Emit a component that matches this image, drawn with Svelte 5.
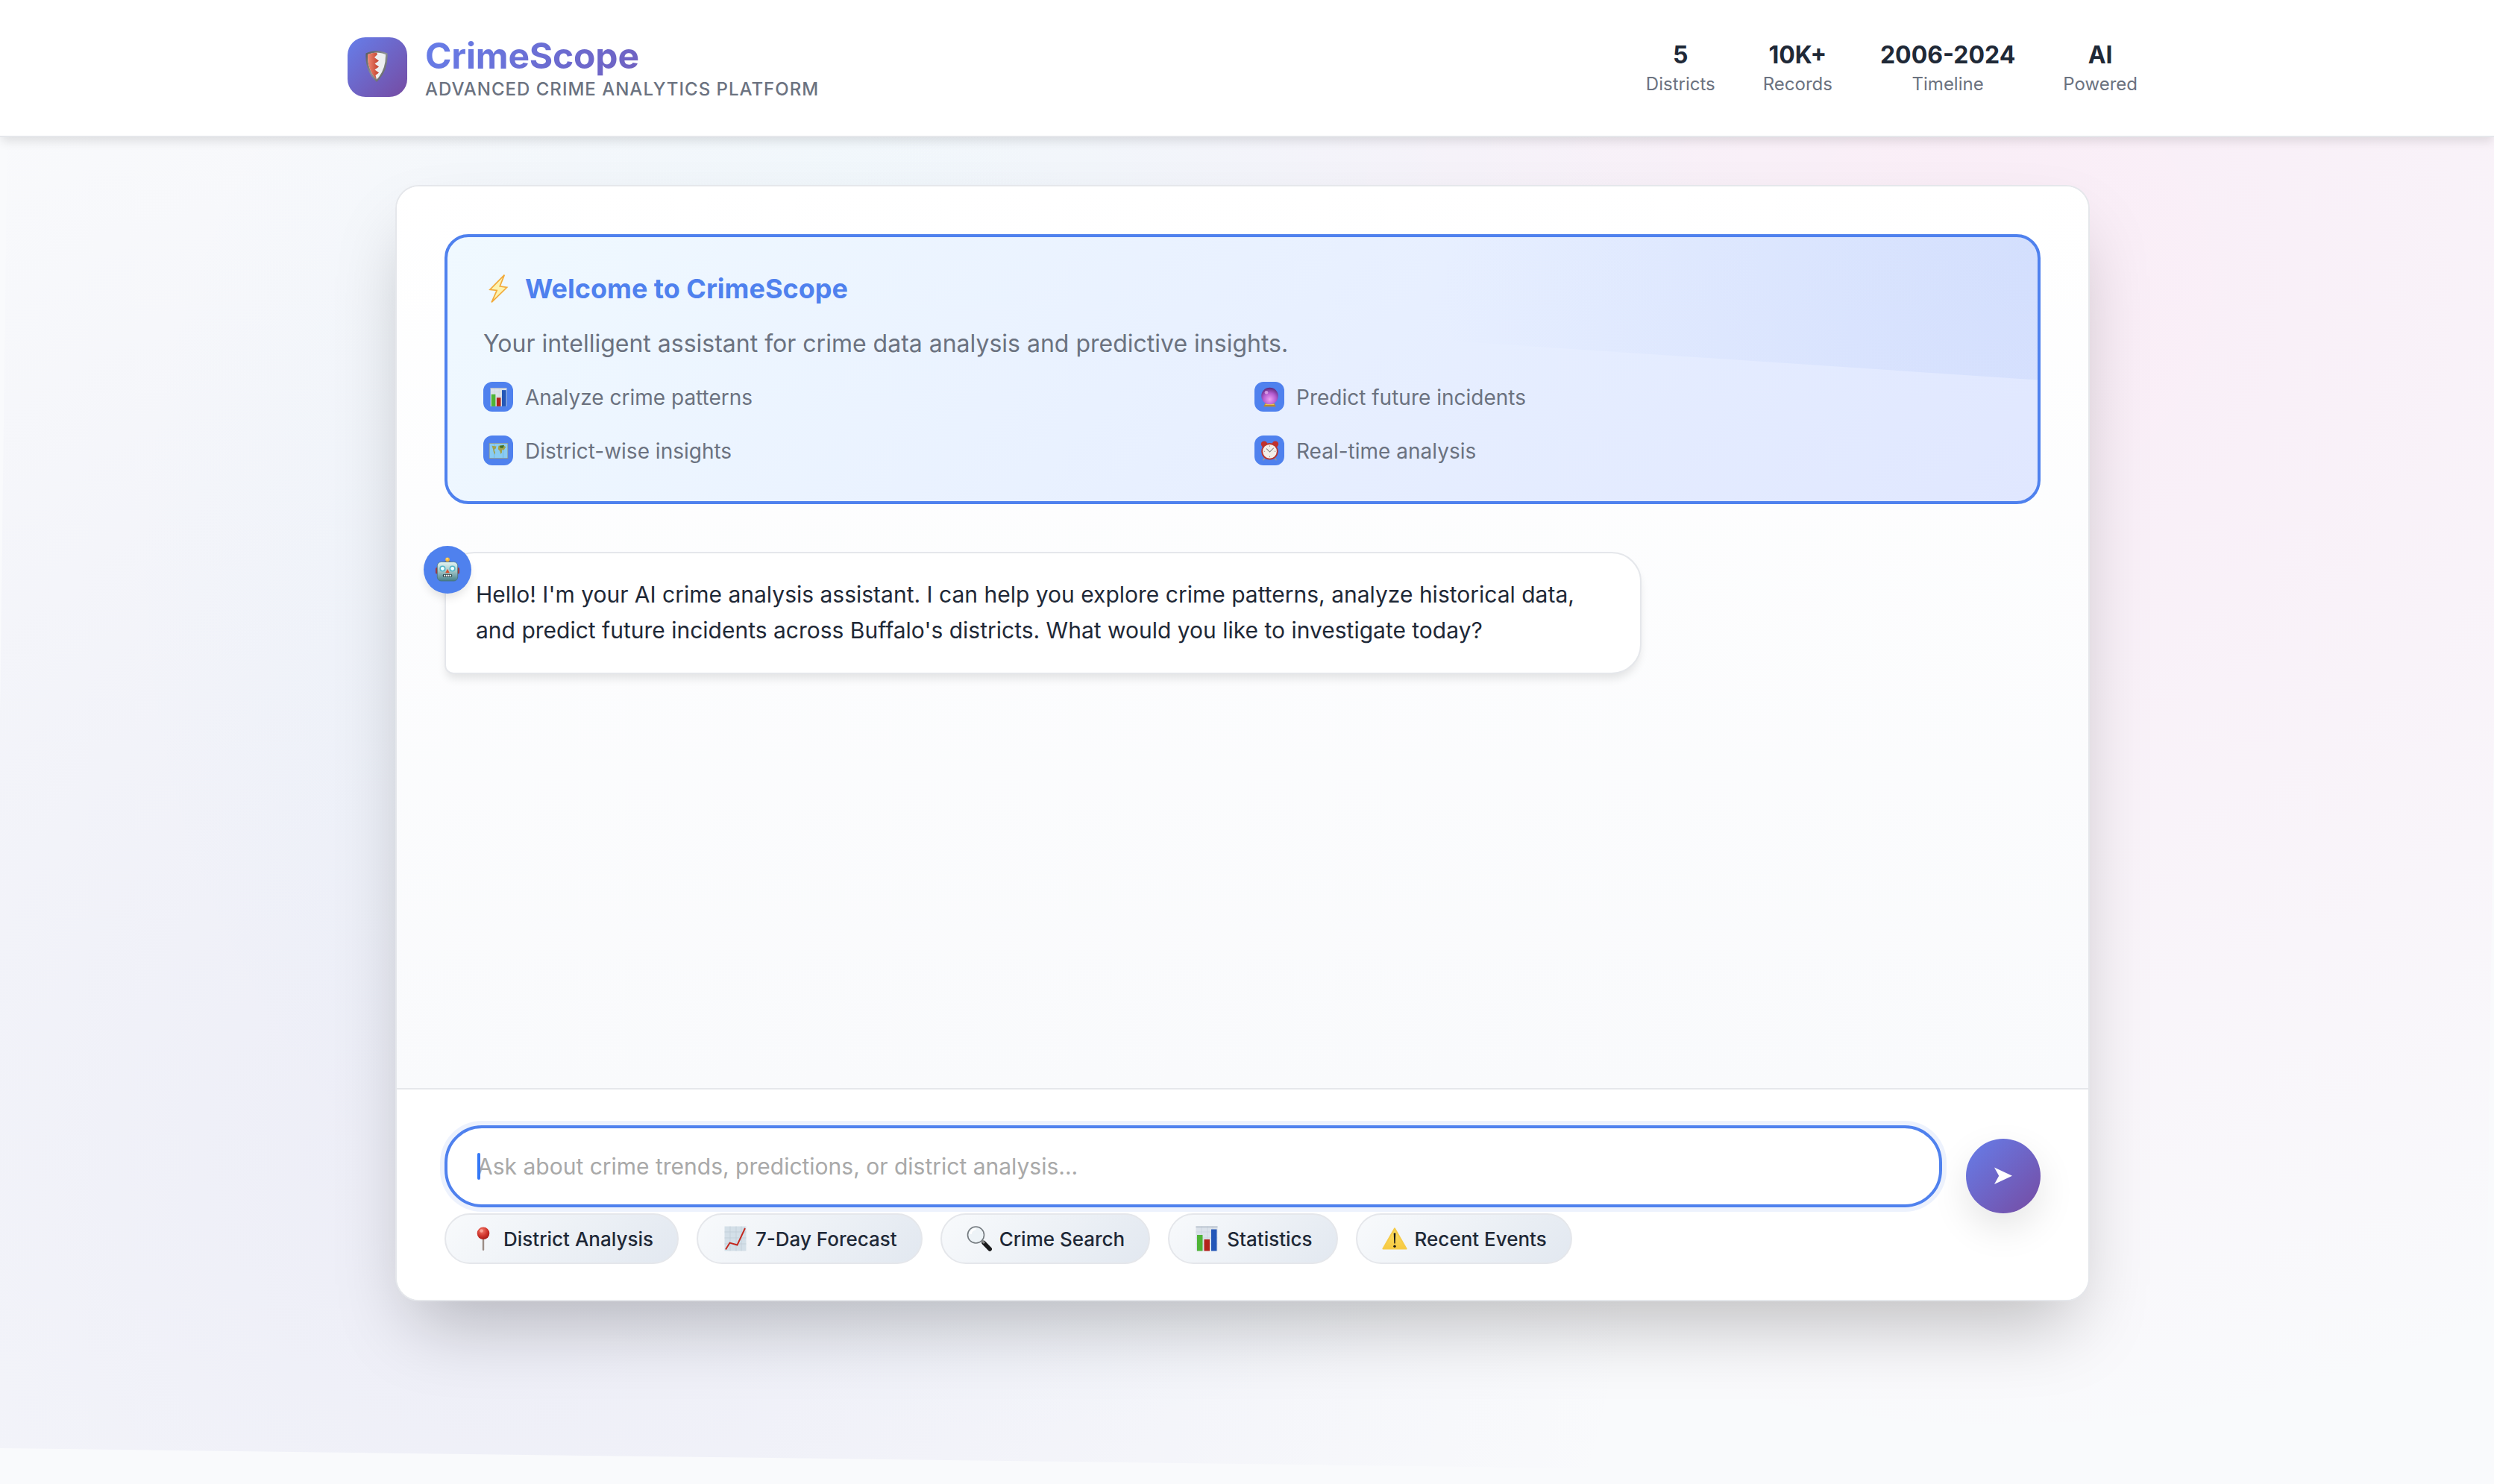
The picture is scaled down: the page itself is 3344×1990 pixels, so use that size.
<script>
  const stats = [
    { value: '5', label: 'Districts' },
    { value: '10K+', label: 'Records' },
    { value: '2006-2024', label: 'Timeline' },
    { value: 'AI', label: 'Powered' }
  ];
  const features = [
    { icon: 'bars', text: 'Analyze crime patterns' },
    { icon: 'crystal', text: 'Predict future incidents' },
    { icon: 'map', text: 'District-wise insights' },
    { icon: 'clock', text: 'Real-time analysis' }
  ];
  const actions = [
    { icon: 'pin', text: 'District Analysis' },
    { icon: 'trend', text: '7-Day Forecast' },
    { icon: 'search', text: 'Crime Search' },
    { icon: 'bars', text: 'Statistics' },
    { icon: 'warning', text: 'Recent Events' }
  ];
</script>

{#snippet glyph(name)}
  <svg class="glyph" viewBox="0 0 36 36" aria-hidden="true">
    {#if name === 'bars'}
      <rect x="3.5" y="1.5" width="29" height="33" fill="#dbe2ea" />
      <path d="M3.5 9h29M3.5 17h29M3.5 25h29M11 1.5v33M19 1.5v33M26 1.5v33" stroke="#c9d2dc" stroke-width=".6" />
      <rect x="3.5" y="1.5" width="29" height="1.5" fill="#b3bdc9" />
      <rect x="5" y="13" width="7.5" height="21.5" fill="#4fb436" />
      <rect x="14.5" y="19" width="7.5" height="15.5" fill="#b3241c" />
      <rect x="24" y="5.5" width="7.5" height="29" fill="#2457b8" />
    {:else if name === 'trend'}
      <rect x="3.5" y="1.5" width="29" height="33" fill="#d3dfe8" />
      <path d="M3.5 9h29M3.5 17h29M3.5 25h29M11 1.5v33M19 1.5v33M26 1.5v33" stroke="#becbd6" stroke-width=".7" />
      <path d="M5 32.5L10.5 23.5L20.5 26.5L31 4" fill="none" stroke="#c4271d" stroke-width="1.9" />
    {:else if name === 'crystal'}
      <path d="M10 29h16l3 6H7z" fill="#b98a2e" />
      <path d="M10 31h16" stroke="#f0cf62" stroke-width="1.5" />
      <circle cx="18" cy="16" r="15" fill="url(#orb)" />
      <circle cx="12" cy="9.5" r="3" fill="#e9b9f4" opacity=".7" />
    {:else if name === 'map'}
      <rect x="1" y="4" width="34" height="28" fill="#8f8f7c" />
      <rect x="2" y="5" width="32" height="26" fill="#8accf2" />
      <path d="M10 5v26M26 5v26" stroke="#6ab0dc" />
      <path d="M6 9l8 1-1 4-3 2 2 5-1 4-2-5-1-5zM18 9l8-1 5 3-3 5-3 1-1-2 0 6-2 3-2-6-3-3z" fill="#a3a24a" />
      <path d="M20 9l8-1-2 5-5 0z" fill="#3c702d" />
    {:else if name === 'clock'}
      <path d="M10 30l-4 5M26 30l4 5" stroke="#999" stroke-width="2" />
      <circle cx="8" cy="6" r="5.5" fill="#c2302b" /><circle cx="28" cy="6" r="5.5" fill="#c2302b" />
      <circle cx="18" cy="19" r="15" fill="#b7352f" />
      <circle cx="18" cy="19" r="12.5" fill="#f3efe9" />
      <path d="M12 14l6 6 7-7" fill="none" stroke="#777" stroke-width="1.4" />
      <path d="M18 8.5v2M18 27.500v2M7.5 19h2M26.5 19h2" stroke="#777" />
    {:else if name === 'pin'}
      <rect x="16.8" y="16" width="2.4" height="18" rx="1.2" fill="#9c8d86" />
      <circle cx="18" cy="10.800" r="8.300" fill="url(#pinhead)" />
      <circle cx="15.5" cy="7.5" r="2.3" fill="#ffb9ac" opacity=".7" />
    {:else if name === 'search'}
      <path d="M24 23.500l8.200 8.500" stroke="#1b1b1d" stroke-width="5.5" stroke-linecap="round" />
      <path d="M21 20l4 4" stroke="#888" stroke-width="3" />
      <circle cx="13.500" cy="13" r="11" fill="#edf3f7" stroke="#73797e" stroke-width="1.6" />
      <path d="M6.500 12a7 7 0 0 1 7-7" fill="none" stroke="#fff" stroke-width="2.5" />
    {:else if name === 'warning'}
      <path d="M18 4.5L33.5 31.5H2.5z" fill="url(#caution)" stroke="#f6cb48" stroke-width="2.2" stroke-linejoin="round" />
      <path d="M16.700 10.500h2.600l-.6 14h-1.400z" fill="#1b1a16" /><circle cx="18" cy="28.200" r="1.700" fill="#1b1a16" />
    {:else if name === 'robot'}
      <path d="M12 9.5q0-3 6-3t6 3z" fill="#51416b" />
      <circle cx="18" cy="4.5" r="3" fill="#f5b53a" /><circle cx="17.4" cy="3.6" r="1.2" fill="#ffe9a0" />
      <rect x="1" y="16" width="4" height="9" rx="2" fill="#a3383c" /><rect x="31" y="16" width="4" height="9" rx="2" fill="#a3383c" />
      <rect x="3.5" y="8" width="29" height="27" rx="5.5" fill="url(#metal)" stroke="#476f76" stroke-width=".8" />
      <circle cx="11" cy="17.5" r="4.3" fill="#51b5c9" /><circle cx="25" cy="17.5" r="4.3" fill="#51b5c9" />
      <circle cx="11" cy="17.5" r="2.6" fill="#f0ffff" /><circle cx="25" cy="17.5" r="2.6" fill="#f0ffff" />
      <path d="M18 18l3 5.5h-6z" fill="#d9512f" />
      <rect x="11.500" y="25.300" width="13" height="4.200" rx="1.500" fill="#243f44" />
      <path d="M13 27.4h10.5" stroke="#f4f4f4" stroke-width="2.3" stroke-dasharray="2 .8" />
    {:else if name === 'bolt'}
      <path d="M25.5 1.5L8 19.2L16.4 20.2L10 34.5L28.5 16.5L20 15.2Z" fill="#fdf3b0" stroke="#f2ab3c" stroke-width="1.5" stroke-linejoin="miter" />
    {/if}
  </svg>
{/snippet}

<svg class="defs" width="0" height="0" aria-hidden="true">
  <defs>
    <radialGradient id="orb" cx=".5" cy=".7" r=".75">
      <stop offset="0" stop-color="#ee9df2" /><stop offset=".5" stop-color="#b35bd0" /><stop offset="1" stop-color="#4f1f6b" />
    </radialGradient>
    <radialGradient id="pinhead" cx=".4" cy=".3" r=".7">
      <stop offset="0" stop-color="#f47a6b" /><stop offset=".6" stop-color="#d0362d" /><stop offset="1" stop-color="#a81d17" />
    </radialGradient>
    <linearGradient id="caution" x1="0" y1="0" x2="0" y2="1">
      <stop offset="0" stop-color="#fbe169" /><stop offset="1" stop-color="#f7c93f" />
    </linearGradient>
    <linearGradient id="metal" x1="0" y1="0" x2="0" y2="1">
      <stop offset="0" stop-color="#e4f5f3" /><stop offset=".5" stop-color="#9ec3c5" /><stop offset="1" stop-color="#477f88" />
    </linearGradient>
    <linearGradient id="steel" x1="0" y1="0" x2="1" y2="1">
      <stop offset="0" stop-color="#55585a" /><stop offset=".5" stop-color="#8e9294" /><stop offset="1" stop-color="#505355" />
    </linearGradient>
    <linearGradient id="red" x1="0" y1="0" x2="1" y2="0">
      <stop offset="0" stop-color="#ef8a74" /><stop offset="1" stop-color="#c23f2b" />
    </linearGradient>
  </defs>
</svg>

<div class="page">
  <div class="ambient"></div>

  <header>
    <div class="bar">
      <div class="brand">
        <div class="logo">
          <svg class="shield" viewBox="0 0 30 42" aria-hidden="true">
            <path d="M15 0Q22 0 29.5 3.5Q31 27 15 42Q-1 27 .5 3.5Q8 0 15 0Z" fill="url(#steel)" />
            <path d="M15 2.5Q21 2.500 27 5Q27.5 26 15 38.500Q2.5 26 3 5Q9 2.5 15 2.5Z" fill="#eef0f1" />
            <path d="M15 2.500Q9 2.500 3 5Q2.500 26 15 38.500L13.500 33L18 29.500L12.500 25.500L18 21.500L12.500 17.500L18 13.500L12 9L16 5Z" fill="url(#red)" />
          </svg>
        </div>
        <div class="names">
          <h1>CrimeScope</h1>
          <p>Advanced Crime Analytics Platform</p>
        </div>
      </div>
      <div class="stats">
        {#each stats as stat}
          <div class="stat">
            <strong>{stat.value}</strong>
            <span>{stat.label}</span>
          </div>
        {/each}
      </div>
    </div>
  </header>

  <main>
    <section class="chat">
      <div class="messages">
        <div class="welcome">
          <h2><span class="bolt">{@render glyph('bolt')}</span>Welcome to CrimeScope</h2>
          <p>Your intelligent assistant for crime data analysis and predictive insights.</p>
          <ul>
            {#each features as feature}
              <li><span class="tile">{@render glyph(feature.icon)}</span><span class="feature">{feature.text}</span></li>
            {/each}
          </ul>
        </div>

        <div class="message">
          <div class="avatar">{@render glyph('robot')}</div>
          Hello! I'm your AI crime analysis assistant. I can help you explore crime patterns, analyze historical data,<br />
          and predict future incidents across Buffalo's districts. What would you like to investigate today?
        </div>
      </div>

      <div class="composer">
        <div class="entry">
          <div class="field"><span class="caret"></span><span class="hint">Ask about crime trends, predictions, or district analysis...</span></div>
          <button class="send" aria-label="Send">
            <svg viewBox="0 0 24 24" aria-hidden="true"><path d="M0 .5L24 11.700L0 23L6.200 11.700Z" fill="#fff" /></svg>
          </button>
        </div>
        <div class="actions">
          {#each actions as action}
            <button class="chip">{@render glyph(action.icon)}<span>{action.text}</span></button>
          {/each}
        </div>
      </div>
    </section>
  </main>
</div>

<style>
  :global(body) {
    margin: 0;
    background: #f9fafc;
  }
  * {
    box-sizing: border-box;
  }
  .defs {
    position: absolute;
  }
  .page {
    position: relative;
    height: 1990px;
    overflow: hidden;
    background: #f9fafc;
    color: #1f2937;
    font-family: Inter, 'Liberation Sans', sans-serif;
  }
  .ambient {
    position: absolute;
    inset: 0;
    transform: translateY(-27px) rotate(0.72deg);
    background:
      radial-gradient(circle at 20% 80%, rgba(120, 119, 198, 0.1) 0%, transparent 50%),
      radial-gradient(circle at 80% 20%, rgba(255, 119, 198, 0.1) 0%, transparent 50%),
      radial-gradient(circle at 40% 40%, rgba(120, 219, 255, 0.1) 0%, transparent 50%);
  }
  h1,
  h2,
  p,
  ul {
    margin: 0;
    padding: 0;
  }
  header {
    position: relative;
    height: 184px;
    padding-right: 12px;
    background: #fff;
    border-bottom: 2px solid #e5e7eb;
    box-shadow: 0 8px 12px -2px rgba(0, 0, 0, 0.1);
  }
  .bar {
    display: flex;
    align-items: center;
    justify-content: space-between;
    width: 2400px;
    height: 180px;
    margin: 0 auto;
  }
  .brand {
    display: flex;
    align-items: center;
    gap: 24px;
  }
  .logo {
    display: grid;
    place-items: center;
    width: 80px;
    height: 80px;
    border-radius: 24px;
    background: linear-gradient(135deg, #667eea 0%, #764ba2 100%);
  }
  .shield {
    width: 30px;
    height: 42px;
    margin: -2px 2px 0 0;
  }
  h1 {
    width: fit-content;
    font-size: 48px;
    line-height: 58px;
    font-weight: 700;
    letter-spacing: -0.2px;
    min-width: 526px;
    background: linear-gradient(135deg, #667eea 0%, #764ba2 100%);
    background-clip: text;
    color: transparent;
  }
  .names p {
    margin-top: 1px;
    font-size: 24px;
    line-height: 30px;
    font-weight: 500;
    letter-spacing: 1px;
    text-transform: uppercase;
    color: #6b7280;
  }
  .stats {
    display: flex;
    gap: 64px;
    padding-top: 6px;
  }
  .stat {
    display: flex;
    flex-direction: column;
    align-items: center;
  }
  .stat strong {
    font-size: 32px;
    line-height: 39px;
    font-weight: 700;
  }
  .stat span {
    font-size: 24px;
    line-height: 39px;
    color: #6b7280;
  }
  main {
    position: relative;
    padding: 64px 12px 0 0;
  }
  .chat {
    width: 2272px;
    margin: 0 auto;
    background: #fff;
    border: 2px solid #e5e7eb;
    border-radius: 32px;
    box-shadow: 0 50px 100px -24px rgba(0, 0, 0, 0.25);
  }
  .messages {
    display: flex;
    flex-direction: column;
    gap: 64px;
    height: 1209px;
    padding: 64px;
    border-radius: 30px 30px 0 0;
    background: linear-gradient(180deg, #fff 0%, #f9fafc 100%);
  }
  .welcome {
    position: relative;
    height: 362px;
    padding: 48px;
    overflow: hidden;
    border: 4px solid #4f81ee;
    border-radius: 32px;
    background: linear-gradient(135deg, #f0f9ff 0%, #e0e7ff 100%);
  }
  .welcome::before {
    content: '';
    position: absolute;
    top: -50%;
    right: -50%;
    width: 100%;
    height: 100%;
    background: radial-gradient(circle, rgba(79, 129, 238, 0.1) 0%, transparent 75%);
    transform: translateY(14px) rotate(3.8deg);
  }
  h2 {
    position: relative;
    display: flex;
    align-items: center;
    gap: 16px;
    height: 42px;
    font-size: 36px;
    line-height: 42px;
    font-weight: 700;
    color: #4f81ee;
  }
  .glyph {
    display: block;
    flex: none;
  }
  .bolt .glyph {
    width: 40px;
    height: 46px;
  }
  .welcome p {
    position: relative;
    margin-top: 27px;
    font-size: 32px;
    line-height: 52px;
    color: #6b7280;
  }
  ul {
    position: relative;
    display: grid;
    grid-template-columns: 1fr 1fr;
    gap: 32px;
    margin-top: 25px;
    list-style: none;
  }
  li {
    display: flex;
    align-items: center;
    gap: 16px;
    height: 40px;
    font-size: 28px;
    color: #6b7280;
  }
  .feature {
    padding-top: 2px;
  }
  .tile {
    display: grid;
    place-items: center;
    width: 40px;
    height: 40px;
    border-radius: 12px;
    background: #4f81ee;
  }
  .tile .glyph {
    width: 27px;
    height: 27px;
  }
  .message {
    position: relative;
    width: 1605px;
    padding: 31px 40px 33px;
    border: 2px solid #e5e7eb;
    border-radius: 40px 40px 40px 12px;
    background: #fff;
    box-shadow: 0 8px 12px -2px rgba(0, 0, 0, 0.1);
    font-size: 30px;
    line-height: 48px;
    white-space: nowrap;
  }
  .avatar {
    position: absolute;
    top: -10px;
    left: -30px;
    display: grid;
    place-items: center;
    width: 64px;
    height: 64px;
    border-radius: 50%;
    background: #4f81ee;
    box-shadow: 0 8px 12px -2px rgba(0, 0, 0, 0.1);
  }
  .avatar .glyph {
    width: 34px;
    height: 34px;
    margin-bottom: 2px;
  }
  .composer {
    padding: 48px 64px;
    border-top: 2px solid #e5e7eb;
    border-radius: 0 0 30px 30px;
    background: #fff;
  }
  .entry {
    display: flex;
    align-items: flex-end;
    gap: 32px;
    height: 118px;
  }
  .field {
    position: relative;
    display: flex;
    align-items: center;
    flex: 1;
    height: 110px;
    margin-bottom: 8px;
    padding: 0 40px;
    border: 4px solid #4f81ee;
    border-radius: 50px;
    box-shadow: 0 0 0 6px rgba(79, 129, 238, 0.1);
    font-size: 30px;
    color: #a9a9a9;
  }
  .send {
    align-self: flex-end;
  }
  .caret {
    position: absolute;
    left: 40px;
    top: 33px;
    width: 4px;
    height: 36px;
    border-radius: 2px;
    background: #3478f6;
  }
  button {
    font-family: inherit;
    border: 0;
  }
  .send {
    display: grid;
    place-items: center;
    width: 100px;
    height: 100px;
    padding: 0;
    border-radius: 50%;
    background: linear-gradient(135deg, #667eea 0%, #764ba2 100%);
    box-shadow: 0 20px 50px rgba(0, 0, 0, 0.1);
  }
  .send svg {
    width: 24px;
    height: 24px;
  }
  .actions {
    display: flex;
    gap: 24px;
  }
  .chip {
    display: flex;
    align-items: center;
    gap: 9px;
    height: 68px;
    padding: 0 32px;
    border: 2px solid #e5e7eb;
    border-radius: 40px;
    background: linear-gradient(135deg, #f8fafc 0%, #e2e8f0 100%);
    font-size: 26px;
    font-weight: 500;
    color: #1f2937;
  }
  .chip .glyph {
    width: 36px;
    height: 36px;
  }
</style>
